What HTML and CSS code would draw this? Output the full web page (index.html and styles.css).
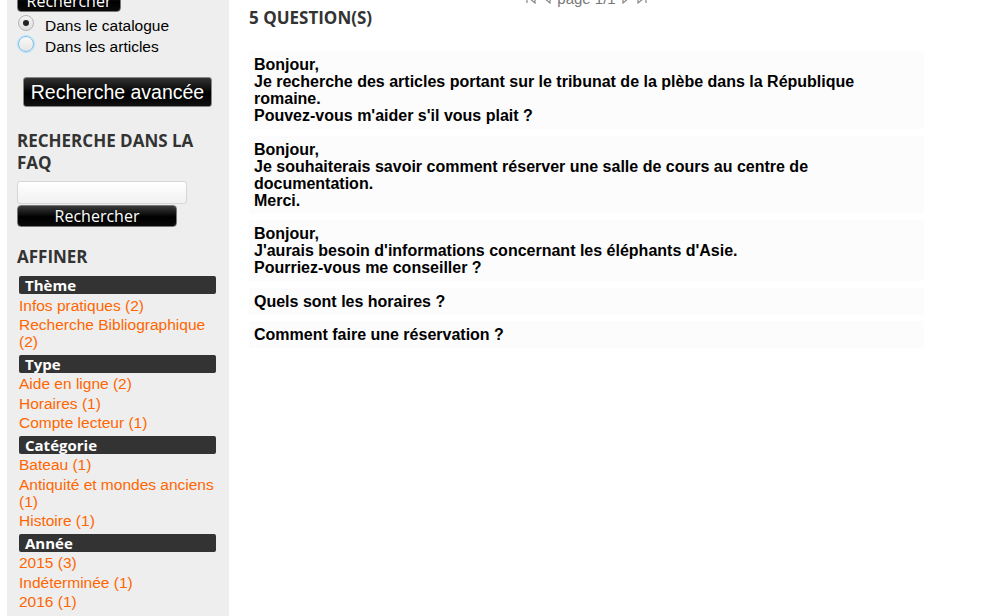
FILE: index.html
```html
<!DOCTYPE html>
<html lang="fr">
<head>
<meta charset="utf-8">
<title>FAQ</title>
<link rel="stylesheet" href="styles.css">
</head>
<body>
<div class="page">
  <aside class="sidebar">
    <button class="btn-black btn-top">Rechercher</button>
    <label class="radio-row"><input type="radio" name="scope" class="radio" checked><span class="radio-text">Dans le catalogue</span></label>
    <label class="radio-row"><input type="radio" name="scope" class="radio radio-focus"><span class="radio-text">Dans les articles</span></label>
    <button class="btn-adv">Recherche avancée</button>

    <h3 class="side-title title-faq">Recherche dans la FAQ</h3>
    <input type="text" class="faq-input">
    <button class="btn-black btn-faq">Rechercher</button>

    <h3 class="side-title title-affiner">Affiner</h3>
    <div class="facets">
      <div class="facet-head">Thème</div>
      <a class="facet-link" href="#">Infos pratiques (2)</a>
      <a class="facet-link" href="#">Recherche Bibliographique (2)</a>
      <div class="facet-head">Type</div>
      <a class="facet-link" href="#">Aide en ligne (2)</a>
      <a class="facet-link" href="#">Horaires (1)</a>
      <a class="facet-link" href="#">Compte lecteur (1)</a>
      <div class="facet-head">Catégorie</div>
      <a class="facet-link" href="#">Bateau (1)</a>
      <a class="facet-link" href="#">Antiquité et mondes anciens (1)</a>
      <a class="facet-link" href="#">Histoire (1)</a>
      <div class="facet-head">Année</div>
      <a class="facet-link" href="#">2015 (3)</a>
      <a class="facet-link" href="#">Indéterminée (1)</a>
      <a class="facet-link" href="#">2016 (1)</a>
    </div>
  </aside>

  <main class="main">
    <div class="pager">
      <svg width="12" height="12" viewBox="0 0 12 12"><path d="M2 1v10M10 1L4 6l6 5z" fill="none" stroke="#888" stroke-width="1.2"/></svg>
      <svg width="10" height="12" viewBox="0 0 10 12"><path d="M8 1L2 6l6 5z" fill="none" stroke="#888" stroke-width="1.2"/></svg>
      <span>page 1/1</span>
      <svg width="10" height="12" viewBox="0 0 10 12"><path d="M2 1l6 5-6 5z" fill="none" stroke="#888" stroke-width="1.2"/></svg>
      <svg width="12" height="12" viewBox="0 0 12 12"><path d="M10 1v10M2 1l6 5-6 5z" fill="none" stroke="#888" stroke-width="1.2"/></svg>
    </div>
    <h2 class="count">5 question(s)</h2>
    <div class="questions">
      <div class="question">Bonjour,<br>Je recherche des articles portant sur le tribunat de la plèbe dans la République romaine.<br>Pouvez-vous m'aider s'il vous plait ?</div>
      <div class="question">Bonjour,<br>Je souhaiterais savoir comment réserver une salle de cours au centre de documentation.<br>Merci.</div>
      <div class="question">Bonjour,<br>J'aurais besoin d'informations concernant les éléphants d'Asie.<br>Pourriez-vous me conseiller ?</div>
      <div class="question">Quels sont les horaires ?</div>
      <div class="question">Comment faire une réservation ?</div>
    </div>
  </main>
</div>
</body>
</html>
```
FILE: styles.css
```css
* { box-sizing: border-box; }
html, body { margin: 0; padding: 0; background: #fff; overflow: hidden; }
body { font-family: "Liberation Sans", Arial, sans-serif; color: #000; }

.page {
  display: flex;
  gap: 20px;
  padding-left: 7px;
  margin-top: -10px;
  min-height: calc(100vh + 10px);
}

.sidebar {
  width: 222px;
  flex: none;
  background: #eeeeee;
  padding: 0 10px;
  display: flex;
  flex-direction: column;
  align-items: flex-start;
}

.btn-black {
  background: linear-gradient(#3a3a3a, #000 55%, #0a0a0a);
  color: #fff;
  border: 1px solid #777;
  border-radius: 4px;
  font-family: "Open Sans", sans-serif;
  font-size: 16px;
  line-height: 20px;
  height: 22px;
  padding: 0;
  cursor: pointer;
}
.btn-top { width: 104px; }

.radio-row {
  display: flex;
  align-items: center;
  height: 21px;
  font-size: 15.5px;
  gap: 11px;
  padding-left: 1px;
}
.radio-text { margin-top: 6px; }
.radio {
  appearance: none;
  -webkit-appearance: none;
  margin: 0;
  width: 16px;
  height: 16px;
  border-radius: 50%;
  border: 1px solid #b5b5b5;
  background: linear-gradient(#f4f4f4, #dedede);
  position: relative;
}
.radio:checked::after {
  content: "";
  position: absolute;
  left: 4px; top: 4px;
  width: 6px; height: 6px;
  border-radius: 50%;
  background: #222;
}
.radio-focus {
  border: 1px solid #7cc4ec;
  box-shadow: 0 0 1px 1px #b7e0f6;
  background: linear-gradient(#f8f8f8, #e6e6e6);
}

.btn-adv {
  margin: 23px 0 0 6px;
  width: 189px;
  height: 30px;
  background: linear-gradient(#333, #000 55%, #111);
  color: #fff;
  border: 1px solid #888;
  border-radius: 3px;
  font-family: "Liberation Sans", Arial, sans-serif;
  font-size: 19.5px;
  padding: 0;
}

.side-title {
  margin: 0;
  font-family: "Open Sans", sans-serif;
  font-weight: 700;
  font-size: 17px;
  line-height: 22px;
  color: #333;
  text-transform: uppercase;
}
.title-faq { margin-top: 23px; width: 190px; }

.faq-input {
  margin-top: 7px;
  width: 170px;
  height: 23px;
  border: 1px solid #d6d6d6;
  border-radius: 3px;
  background: linear-gradient(#fff, #f1f1f1);
}
.btn-faq { margin-top: 1px; width: 160px; }

.title-affiner { margin-top: 19px; }

.facets {
  margin: 8px 0 0 2px;
  width: 197px;
  display: flex;
  flex-direction: column;
}
.facet-head {
  background: #333;
  color: #fff;
  font-family: "Open Sans", sans-serif;
  font-weight: 700;
  font-size: 15px;
  line-height: 18px;
  height: 18px;
  padding-left: 6px;
  border-radius: 2px;
  margin-top: 4.5px;
}
.facet-head:first-child { margin-top: 0; }
.facet-link {
  color: #ff6600;
  text-decoration: none;
  font-size: 15.5px;
  line-height: 17px;
  margin-top: 2.5px;
}

.main {
  width: 675px;
  flex: none;
}
.pager {
  height: 16px;
  display: flex;
  justify-content: center;
  align-items: center;
  gap: 5px;
  color: #777;
  font-size: 15px;
}
.count {
  margin: 0;
  font-family: "Open Sans", sans-serif;
  font-weight: 700;
  font-size: 17px;
  line-height: 24px;
  color: #333;
  text-transform: uppercase;
}
.questions {
  margin-top: 21px;
  display: flex;
  flex-direction: column;
  gap: 6.5px;
}
.question {
  background: #fcfcfc;
  padding: 5px 10px 5px 5px;
  font-weight: 700;
  font-size: 16px;
  line-height: 17px;
}
```
